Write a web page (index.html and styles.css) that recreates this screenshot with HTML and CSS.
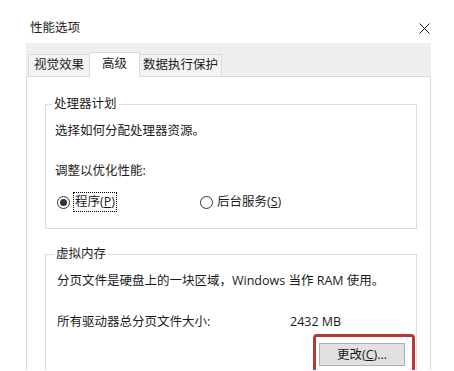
FILE: index.html
```html
<!DOCTYPE html>
<html lang="zh-CN">
<head>
<meta charset="utf-8">
<title>性能选项</title>
<link rel="stylesheet" href="styles.css">
</head>
<body>
<div class="titlebar">
  <span class="title">性能选项</span>
  <svg class="close" width="11" height="11" viewBox="0 0 11 11"><path d="M0.5 0.5 L10.5 10.5 M10.5 0.5 L0.5 10.5" stroke="#1a1a1a" stroke-width="1" fill="none"/></svg>
</div>
<div class="dialog">
  <div class="tabs">
    <div class="tab t1">视觉效果</div>
    <div class="tab t2 active">高级</div>
    <div class="tab t3">数据执行保护</div>
  </div>
  <div class="page">
    <fieldset class="group g1">
      <legend>处理器计划</legend>
      <p class="desc">选择如何分配处理器资源。</p>
      <p class="label">调整以优化性能:</p>
      <div class="radios">
        <label class="radio first"><span class="circle checked"></span><span class="focus">程序(<u>P</u>)</span></label>
        <label class="radio"><span class="circle"></span><span class="rtext">后台服务(<u>S</u>)</span></label>
      </div>
    </fieldset>
    <fieldset class="group g2">
      <legend>虚拟内存</legend>
      <p class="desc">分页文件是硬盘上的一块区域，Windows 当作 RAM 使用。</p>
      <div class="size"><span class="size-label">所有驱动器总分页文件大小:</span><span class="size-value">2432 MB</span></div>
      <div class="btnrow">
        <div class="highlight"><button class="btn">更改(<u>C</u>)...</button></div>
      </div>
    </fieldset>
  </div>
</div>
</body>
</html>
```
FILE: styles.css
```css
html, body {
  margin: 0;
  padding: 0;
  background: #ffffff;
}
body {
  width: 454px;
  height: 371px;
  overflow: hidden;
  font-family: "Open Sans", "Noto Sans CJK SC", sans-serif;
  font-size: 12.5px;
  color: #1b1b1b;
}
p { margin: 0; }

.titlebar {
  display: flex;
  justify-content: space-between;
  align-items: center;
  height: 16px;
  padding: 20px 24px 7px 30px;
}
.title {
  font-size: 12.5px;
  line-height: 16px;
}
.close { display: block; }

.dialog {
  margin-left: 26px;
  width: 405px;
}
.tabs {
  display: flex;
  align-items: flex-end;
  height: 33px;
  padding-left: 2px;
  background: #efefef;
  border-bottom: 1px solid #d9d9d9;
}
.tab {
  box-sizing: border-box;
  height: 22px;
  line-height: 20px;
  text-align: center;
  border: 1px solid #d9d9d9;
  border-bottom: none;
  background: #f3f3f3;
}
.t1 { width: 61px; border-right: none; }
.t2 { width: 51px; }
.t3 { width: 82px; border-left: none; }
.tab.active {
  height: 25px;
  margin-bottom: -1px;
  background: #ffffff;
  line-height: 21px;
}

.page {
  height: 274px;
  overflow: hidden;
  border-left: 1px solid #d9d9d9;
  border-right: 1px solid #d9d9d9;
  padding-top: 19px;
}
.group {
  margin: 0 13px 0 18px;
  border: 1px solid #dcdcdc;
  min-width: 0;
}
.group legend {
  margin-left: -3px;
  padding: 0 2px;
  line-height: 16px;
}
.g1 { padding: 0 10px 16px 9px; }
.g2 { padding: 0 1px 0 11px; margin-top: 17px; }

.desc { line-height: 16px; margin-top: 11px; }
.label { line-height: 16px; margin-top: 24px; }

.radios {
  display: flex;
  margin-top: 13px;
  height: 20px;
  align-items: center;
}
.radio {
  display: flex;
  align-items: center;
}
.radio.first { width: 145px; }
.circle {
  box-sizing: border-box;
  width: 13px;
  height: 13px;
  border: 1px solid #333333;
  border-radius: 50%;
  display: flex;
  align-items: center;
  justify-content: center;
}
.first .circle { margin-left: 2px; }
.circle.checked::after {
  content: "";
  width: 7px;
  height: 7px;
  border-radius: 50%;
  background: #333333;
}
.focus {
  margin-left: 3px;
  padding: 1px 1px;
  border: 1px dotted #000000;
  line-height: 16px;
}
.rtext { margin-left: 4px; line-height: 16px; }

.size {
  display: flex;
  margin-top: 25px;
  line-height: 16px;
}
.size-label { width: 233px; }

.btnrow {
  display: flex;
  justify-content: flex-end;
  margin-top: 4px;
}
.highlight {
  border: 3px solid #b53a34;
  border-radius: 4px;
  padding: 6px 7px 6px 3px;
}
.btn {
  display: block;
  width: 86px;
  height: 23px;
  padding: 0;
  background: #e1e1e1;
  border: 1px solid #adadad;
  font-family: inherit;
  font-size: 12.5px;
  color: #1b1b1b;
  line-height: 20px;
}
```
